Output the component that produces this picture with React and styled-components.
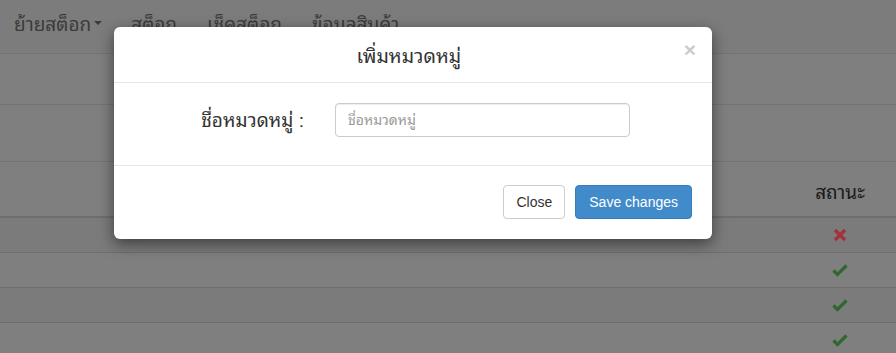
import React from "react";
import styled, { createGlobalStyle } from "styled-components";

const Global = createGlobalStyle`
  html, body { margin: 0; padding: 0; }
  body {
    background: #7f7f7f;
    font-family: "Liberation Sans", "Noto Sans Thai Looped", "Noto Sans Thai", Tahoma, "DejaVu Sans", sans-serif;
    color: #1a1a1a;
    overflow: hidden;
  }
  * { box-sizing: border-box; }
`;

const Page = styled.div`
  position: relative;
  width: 896px;
  height: 353px;
  overflow: hidden;
  background: #7f7f7f;
`;

const Navbar = styled.nav`
  display: flex;
  align-items: center;
  height: 54px;
  padding: 0 0 9px 0;
  background: #7c7c7c;
  border-bottom: 1px solid #737373;
`;

const NavItem = styled.a`
  display: flex;
  align-items: center;
  gap: 3px;
  padding: 0 ${(p) => p.$pad || 15}px;
  font-size: 19px;
  color: #3b3b3b;
  text-decoration: none;
`;

const Caret = styled.span`
  display: inline-block;
  width: 0;
  height: 0;
  border-left: 4px solid transparent;
  border-right: 4px solid transparent;
  border-top: 4px solid #3b3b3b;
  margin-top: 2px;
`;

const Band = styled.div`
  height: ${(p) => p.$h}px;
  border-bottom: 1px solid #737373;
`;

const Table = styled.div`
  display: grid;
  grid-template-columns: 1fr 112px;
`;

const HeadCell = styled.div`
  height: 56px;
  display: flex;
  align-items: center;
  justify-content: ${(p) => (p.$center ? "center" : "flex-start")};
  font-size: 19px;
  color: #1a1a1a;
  padding-top: 2px;
  border-bottom: 2px solid #6e6e6e;
`;

const Cell = styled.div`
  height: 35px;
  display: flex;
  align-items: center;
  justify-content: ${(p) => (p.$center ? "center" : "flex-start")};
  background: ${(p) => (p.$striped ? "#7b7b7b" : "#7f7f7f")};
  border-bottom: 1px solid #6e6e6e;
`;

const Modal = styled.div`
  position: absolute;
  left: 114px;
  top: 27px;
  width: 598px;
  height: 212px;
  background: #fff;
  border-radius: 6px;
  box-shadow: 0 5px 15px rgba(0, 0, 0, 0.5);
  display: flex;
  flex-direction: column;
`;

const ModalHeader = styled.div`
  display: flex;
  align-items: center;
  height: 56px;
  padding: 0 16px 0 20px;
  border-bottom: 1px solid #e5e5e5;
`;

const ModalTitle = styled.h4`
  flex: 1;
  margin: 0;
  text-align: center;
  font-size: 19.5px;
  font-weight: normal;
  color: #333;
`;

const CloseX = styled.button`
  border: 0;
  background: none;
  padding: 0;
  margin-top: -10px;
  font-family: "Liberation Sans", sans-serif;
  font-size: 21px;
  font-weight: bold;
  line-height: 1;
  color: #cccccc;
  cursor: pointer;
`;

const ModalBody = styled.div`
  display: grid;
  grid-template-columns: 175px 295px;
  column-gap: 31px;
  align-items: center;
  padding: 20px 15px 0 15px;
  height: 83px;
  align-content: start;
  border-bottom: 1px solid #e5e5e5;
`;

const Label = styled.label`
  text-align: right;
  font-size: 19px;
  color: #333;
  margin-top: -4px;
`;

const Input = styled.input`
  height: 34px;
  width: 295px;
  padding: 6px 12px;
  font-size: 14px;
  font-family: inherit;
  color: #555;
  border: 1px solid #ccc;
  border-radius: 4px;
  box-shadow: inset 0 1px 1px rgba(0, 0, 0, 0.075);
  &::placeholder { color: #999; }
`;

const ModalFooter = styled.div`
  display: flex;
  justify-content: flex-end;
  gap: 10px;
  padding: 19px 20px 20px;
`;

const Button = styled.button`
  height: 34px;
  padding: 6px ${(p) => (p.$primary ? 13 : 12)}px;
  font-family: "Liberation Sans", Arial, sans-serif;
  font-size: 14px;
  border-radius: 4px;
  border: 1px solid ${(p) => (p.$primary ? "#357ebd" : "#ccc")};
  background: ${(p) => (p.$primary ? "#428bca" : "#fff")};
  color: ${(p) => (p.$primary ? "#fff" : "#333")};
  cursor: pointer;
`;

const Check = () => (
  <svg width="16" height="14" viewBox="0 0 16 14">
    <path d="M1.5 7.5 L5.5 11.5 L14.5 2.5" fill="none" stroke="#2f682f" strokeWidth="3.2" strokeLinejoin="miter" />
  </svg>
);

const Cross = () => (
  <svg width="14" height="14" viewBox="0 0 14 14">
    <path d="M2 2 L12 12 M12 2 L2 12" fill="none" stroke="#a3303a" strokeWidth="3.2" />
  </svg>
);

const rows = ["x", "ok", "ok", "ok"];

export default function App() {
  return (
    <>
      <Global />
      <Page>
        <Navbar>
          <NavItem $pad={14}>
            ย้ายสต็อก
            <Caret />
          </NavItem>
          <NavItem $pad={15}>สต็อก</NavItem>
          <NavItem $pad={15}>เช็คสต็อก</NavItem>
          <NavItem $pad={15}>ข้อมูลสินค้า</NavItem>
        </Navbar>
        <Band $h={51} />
        <Band $h={57} />
        <Table>
          <HeadCell />
          <HeadCell $center>สถานะ</HeadCell>
          {rows.map((r, i) => (
            <React.Fragment key={i}>
              <Cell $striped={i % 2 === 0} />
              <Cell $striped={i % 2 === 0} $center>
                {r === "x" ? <Cross /> : <Check />}
              </Cell>
            </React.Fragment>
          ))}
        </Table>
        <Modal>
          <ModalHeader>
            <ModalTitle>เพิ่มหมวดหมู่</ModalTitle>
            <CloseX>×</CloseX>
          </ModalHeader>
          <ModalBody>
            <Label>ชื่อหมวดหมู่ :</Label>
            <Input placeholder="ชื่อหมวดหมู่" />
          </ModalBody>
          <ModalFooter>
            <Button>Close</Button>
            <Button $primary>Save changes</Button>
          </ModalFooter>
        </Modal>
      </Page>
    </>
  );
}
